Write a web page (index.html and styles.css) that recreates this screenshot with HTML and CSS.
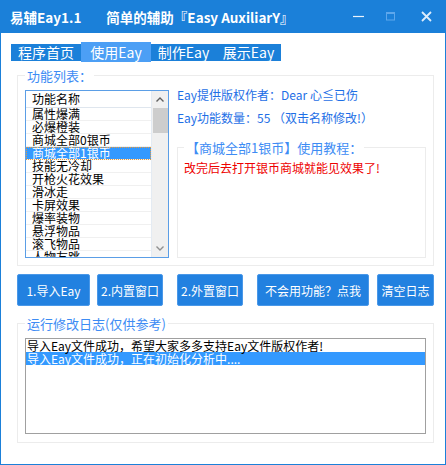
FILE: index.html
```html
<!DOCTYPE html>
<html lang="zh-CN">
<head>
    <meta charset="UTF-8">
    <meta name="viewport" content="width=device-width, initial-scale=1.0">
    <title>易辅Eay1.1</title>
    <link rel="stylesheet" href="styles.css">
</head>
<body>

<div class="window">
    <div class="titlebar">
        <span class="app-name">易辅Eay1.1</span>
        <span class="app-desc">简单的辅助『Easy AuxiliarY』</span>
        <div class="controls">
            <svg class="ctl ctl-min" width="11" height="11" viewBox="0 0 11 11"><path d="M0 5.5h11" stroke="#eaf3fd" stroke-width="1.2"/></svg>
            <svg class="ctl ctl-max" width="9" height="11" viewBox="0 0 9 11"><rect x="0.5" y="1.5" width="8" height="7.5" fill="none" stroke="#5ea7ec"/><path d="M0.5 2.5h8" stroke="#5ea7ec"/></svg>
            <svg class="ctl ctl-close" width="11" height="11" viewBox="0 0 11 11"><path d="M1 1L10 10M10 1L1 10" stroke="#dcecfc" stroke-width="1.8"/></svg>
        </div>
    </div>

    <div class="client">
        <div class="tabs">
            <span class="tab">程序首页</span>
            <span class="tab active">使用Eay</span>
            <span class="tab narrow">制作Eay</span>
            <span class="tab narrow">展示Eay</span>
        </div>

        <fieldset class="group func-group">
            <legend>功能列表：</legend>
            <div class="func-body">
                <div class="listview">
                    <div class="lv-main">
                        <div class="lv-head">功能名称</div>
                        <div class="lv-row">属性爆满</div>
                        <div class="lv-row">必爆橙装</div>
                        <div class="lv-row">商城全部0银币</div>
                        <div class="lv-row selected">商城全部1银币</div>
                        <div class="lv-row">技能无冷却</div>
                        <div class="lv-row">开枪火花效果</div>
                        <div class="lv-row">滑冰走</div>
                        <div class="lv-row">卡屏效果</div>
                        <div class="lv-row">爆率装物</div>
                        <div class="lv-row">悬浮物品</div>
                        <div class="lv-row">滚飞物品</div>
                        <div class="lv-row">人物友跳</div>
                    </div>
                    <div class="scrollbar">
                        <span class="sb-arrow">
                            <svg width="8" height="5" viewBox="0 0 8 5"><path d="M0.5 4.5L4 1L7.5 4.5" stroke="#606060" stroke-width="1.4" fill="none"/></svg>
                        </span>
                        <span class="sb-thumb"></span>
                        <span class="sb-track"></span>
                        <span class="sb-arrow">
                            <svg width="8" height="5" viewBox="0 0 8 5"><path d="M0.5 0.5L4 4L7.5 0.5" stroke="#909090" stroke-width="1.4" fill="none"/></svg>
                        </span>
                    </div>
                </div>

                <div class="detail">
                    <p class="info">Eay提供版权作者：Dear 心≦已伤</p>
                    <p class="info second">Eay功能数量：55 （双击名称修改!）</p>
                    <fieldset class="group tutorial">
                        <legend>【商城全部1银币】使用教程：</legend>
                        <p class="tip">改完后去打开银币商城就能见效果了!</p>
                    </fieldset>
                </div>
            </div>
        </fieldset>

        <div class="buttons">
            <button class="btn btn-import">1.导入Eay</button>
            <button class="btn btn-inner">2.内置窗口</button>
            <button class="btn btn-outer">2.外置窗口</button>
            <button class="btn btn-help">不会用功能？点我</button>
            <button class="btn btn-clear">清空日志</button>
        </div>

        <fieldset class="group log-group">
            <legend>运行修改日志(仅供参考)</legend>
            <div class="log-list">
                <div class="log-row">导入Eay文件成功，希望大家多多支持Eay文件版权作者!</div>
                <div class="log-row selected">导入Eay文件成功，正在初始化分析中....</div>
            </div>
        </fieldset>
    </div>
</div>

</body>
</html>
```

FILE: styles.css
```css
/* Window frame */
* {
    box-sizing: border-box;
}

body {
    margin: 0;
    background: #ffffff;
    font-family: "Noto Sans CJK SC", "Noto Sans", sans-serif;
    font-size: 12px;
    color: #000;
}

.window {
    width: 446px;
    height: 465px;
    border: 1px solid #1b80d9;
    border-top: 0;
    display: flex;
    flex-direction: column;
}

.titlebar {
    height: 33px;
    background: #1b80d9;
    color: #ffffff;
    display: flex;
    align-items: center;
    font-weight: bold;
    font-size: 13.5px;
}

.app-name {
    margin-left: 9px;
}

.app-desc {
    margin-left: 25px;
}

.controls {
    margin-left: auto;
    margin-right: 13px;
    display: flex;
    align-items: center;
}

.ctl-max {
    margin-left: 22px;
}

.ctl-close {
    margin-left: 26px;
}

/* Tabs */
.client {
    padding-top: 11px;
}

.tabs {
    display: flex;
    margin-left: 10px;
    height: 17px;
}

.tab {
    width: 70px;
    height: 17px;
    line-height: 17px;
    background: #1b80d9;
    color: #ffffff;
    font-size: 14px;
    text-align: center;
}

.tab.narrow {
    width: 65px;
}

.tab.active {
    background: #4c9ff5;
    height: 20px;
    margin-top: -2px;
    line-height: 21px;
}

/* Group boxes */
.group {
    margin: 0 11px 0 16px;
    min-width: 0;
    border: 1px solid #ececec;
    padding: 6px 7px 7px 7px;
}

.group legend {
    padding: 0 2px;
    font-size: 13px;
    line-height: 17px;
    color: #3d8cf4;
}

.func-group {
    margin-top: 6px;
}

.func-body {
    display: flex;
    gap: 8px;
    height: 168px;
}

/* Function list */
.listview {
    width: 144px;
    height: 168px;
    border: 1px solid #5b9ee6;
    display: flex;
    overflow: hidden;
}

.lv-main {
    width: 126px;
    border-right: 1px solid #e4ebf3;
    overflow: hidden;
}

.lv-head {
    height: 17px;
    line-height: 16px;
    padding-left: 6px;
    border-bottom: 1px solid #dfe6ee;
}

.lv-row {
    height: 13px;
    line-height: 12px;
    padding-left: 6px;
    border-bottom: 1px solid #f0f0f0;
    white-space: nowrap;
}

.lv-row.selected {
    background: #3399ff;
    color: #ffffff;
    outline: 1px dotted #e99a3a;
    outline-offset: -1px;
}

.scrollbar {
    width: 16px;
    background: #f0f0f0;
    display: flex;
    flex-direction: column;
}

.sb-arrow {
    height: 17px;
    display: flex;
    align-items: center;
    justify-content: center;
}

.sb-thumb {
    height: 25px;
    margin-left: 1px;
    background: #cdcdcd;
}

.sb-track {
    flex: 1;
}

/* Detail side */
.detail {
    flex: 1;
    margin-top: -3px;
    display: flex;
    flex-direction: column;
}

.info {
    margin: 0;
    line-height: 16px;
    color: #1e6fe6;
    white-space: nowrap;
}

.info.second {
    margin-top: 7px;
}

.tutorial {
    flex: 1;
    margin: 13px 0 0 0;
    padding: 4px 6px;
}

.tip {
    margin: 0;
    line-height: 16px;
    color: #ee0000;
}

/* Buttons */
.buttons {
    display: flex;
    margin: 8px 0 0 16px;
}

.btn {
    height: 32px;
    padding: 0;
    background: #2281e0;
    border: 1px solid #4a98e8;
    border-radius: 2px;
    color: #ffffff;
    font-family: inherit;
    font-size: 12px;
    cursor: pointer;
}

.btn-import { width: 73px; }
.btn-inner { width: 66px; margin-left: 7px; }
.btn-outer { width: 66px; margin-left: 14px; }
.btn-help { width: 112px; margin-left: 14px; }
.btn-clear { width: 57px; margin-left: 8px; }

/* Log */
.log-group {
    margin-top: 9px;
    padding-bottom: 8px;
}

.log-list {
    height: 96px;
    border: 1px solid #a0a0a0;
}

.log-row {
    height: 13px;
    line-height: 13px;
    padding-left: 1px;
    white-space: nowrap;
}

.log-row.selected {
    background: #3399ff;
    color: #ffffff;
}
```
